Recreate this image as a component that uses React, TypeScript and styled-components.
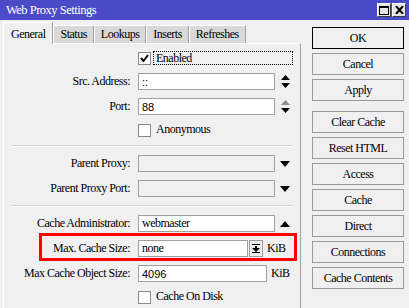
import React from 'react';
import styled, { createGlobalStyle } from 'styled-components';

const GlobalStyle = createGlobalStyle`
    html, body {
        margin: 0;
        padding: 0;
        background: #f0f0f0;
    }
    * {
        box-sizing: border-box;
    }
`;

const Window = styled.div`
    width: 409px;
    height: 308px;
    overflow: hidden;
    background: #f0f0f0;
    font-family: "Liberation Serif", "Times New Roman", serif;
    font-size: 12px;
    letter-spacing: -0.5px;
    color: #000;
    display: flex;
    flex-direction: column;
`;

const TitleBar = styled.div`
    height: 20px;
    flex-shrink: 0;
    background: #4b4bc8;
    display: flex;
    align-items: center;
    padding: 0 3px 0 6px;
`;

const Title = styled.div`
    flex: 1;
    color: #fff;
    font-size: 12.5px;
    padding-top: 1px;
`;

const TitleButton = styled.div`
    width: 14px;
    height: 14px;
    margin-left: 1px;
    background: #e4e4e4;
    border: 1px solid #fff;
    border-right-color: #404040;
    border-bottom-color: #404040;
    display: flex;
    align-items: center;
    justify-content: center;
`;

const Body = styled.div`
    flex: 1;
    display: flex;
    padding-top: 2px;
`;

const LeftSide = styled.div`
    width: 298px;
    margin-left: 3px;
    display: flex;
    flex-direction: column;
`;

const TabRow = styled.div`
    height: 21px;
    display: flex;
    align-items: flex-end;
    position: relative;
    z-index: 1;
`;

const Tab = styled.div<{ $active?: boolean }>`
    height: ${p => (p.$active ? 22 : 18)}px;
    margin-bottom: ${p => (p.$active ? -1 : 0)}px;
    padding: ${p => (p.$active ? '2px 7px 0 7px' : '0 6px')};
    background: ${p => (p.$active ? '#f0f0f0' : '#d9d9d9')};
    border-left: 1px solid #fff;
    border-top: 1px solid #fff;
    border-right: 1px solid #a0a0a0;
    display: flex;
    align-items: center;
    white-space: nowrap;
`;

const Panel = styled.div`
    flex: 1;
    border-top: 1px solid #fff;
    border-left: 1px solid #fff;
    border-right: 1px solid #a0a0a0;
    padding-top: 7px;
    display: flex;
    flex-direction: column;
    gap: 8px;
`;

const Row = styled.div<{ $marked?: boolean }>`
    height: 17px;
    display: flex;
    align-items: center;
    position: relative;

    ${p =>
        p.$marked &&
        `
        &::after {
            content: '';
            position: absolute;
            left: 35px;
            right: 3px;
            top: -7px;
            bottom: -4px;
            border: 3px solid #ff0000;
        }
    `}
`;

const Label = styled.div`
    width: 127px;
    text-align: right;
    padding-right: 1px;
    margin-right: 7px;
    white-space: nowrap;
`;

const Input = styled.div<{ $w: number; $sans?: boolean; $empty?: boolean }>`
    width: ${p => p.$w}px;
    height: 17px;
    border: 1px solid #a0a0a0;
    background: ${p => (p.$empty ? '#f0f0f0' : '#fff')};
    padding-left: 3px;
    display: flex;
    align-items: center;
    font-family: ${p => (p.$sans ? '"Liberation Sans", Arial, sans-serif' : 'inherit')};
    font-size: ${p => (p.$sans ? 11 : 12)}px;
    letter-spacing: ${p => (p.$sans ? 0 : -0.5)}px;
    white-space: nowrap;
`;

const Trail = styled.div`
    width: 10px;
    margin-left: 5px;
    display: flex;
    align-items: center;
    justify-content: center;
`;

const SmallButton = styled.div`
    width: 14px;
    height: 17px;
    margin-left: 1px;
    border: 1px solid #a0a0a0;
    background: #ececec;
    display: flex;
    align-items: center;
    justify-content: center;
`;

const Unit = styled.div`
    margin-left: 4px;
`;

const CheckRow = styled.div`
    height: 14px;
    margin-left: 134px;
    display: flex;
    align-items: center;
`;

const Box = styled.div`
    width: 13px;
    height: 13px;
    border: 1px solid #8a8a8a;
    background: #fff;
    display: flex;
    align-items: center;
    justify-content: center;
    flex-shrink: 0;
`;

const CheckText = styled.div<{ $focus?: boolean }>`
    margin-left: ${p => (p.$focus ? 2 : 5)}px;
    padding: 0 0 0 ${p => (p.$focus ? 2 : 0)}px;
    height: 14px;
    line-height: 13px;
    width: ${p => (p.$focus ? '140px' : 'auto')};
    border: ${p => (p.$focus ? '1px dotted #000' : 'none')};
`;

const Separator = styled.div`
    height: 2px;
    margin: 0 8px;
    border-top: 1px solid #d2d2d2;
    border-bottom: 1px solid #fff;
`;

const ButtonColumn = styled.div`
    width: 92px;
    margin-left: 11px;
    padding-top: 5px;
    display: flex;
    flex-direction: column;
    gap: 4px;
`;

const Button = styled.div<{ $primary?: boolean; $spaced?: boolean }>`
    height: 22px;
    border: 1px solid ${p => (p.$primary ? '#000' : '#9a9a9a')};
    background: #f0f0f0;
    margin-top: ${p => (p.$spaced ? 6 : 0)}px;
    display: flex;
    align-items: center;
    justify-content: center;
    white-space: nowrap;
`;

function SpinArrows({ upColor }: { upColor: string }) {
    return (
        <svg width="9" height="13" viewBox="0 0 9 13">
            <polygon points="0,5 9,5 4.5,0" fill={upColor} />
            <polygon points="0,8 9,8 4.5,13" fill="#000" />
        </svg>
    );
}

function DownArrow() {
    return (
        <svg width="10" height="6" viewBox="0 0 10 6">
            <polygon points="0,0 10,0 5,6" fill="#000" />
        </svg>
    );
}

function UpArrow() {
    return (
        <svg width="10" height="6" viewBox="0 0 10 6">
            <polygon points="0,6 10,6 5,0" fill="#000" />
        </svg>
    );
}

function UnsetArrow() {
    return (
        <svg width="8" height="9" viewBox="0 0 8 9">
            <rect x="0" y="0" width="8" height="1" fill="#000" />
            <rect x="3" y="2" width="2" height="2" fill="#000" />
            <polygon points="0,4 8,4 4,8" fill="#000" />
            <rect x="0" y="8" width="8" height="1" fill="#000" />
        </svg>
    );
}

function Check() {
    return (
        <svg width="9" height="9" viewBox="0 0 9 9">
            <polyline points="1,4 3.5,7 8,1" fill="none" stroke="#000" strokeWidth="2" />
        </svg>
    );
}

function MaxIcon() {
    return (
        <svg width="10" height="9" viewBox="0 0 10 9">
            <rect x="0.5" y="0.5" width="9" height="8" fill="none" stroke="#000" />
            <rect x="0" y="0" width="10" height="2" fill="#000" />
        </svg>
    );
}

function CloseIcon() {
    return (
        <svg width="9" height="8" viewBox="0 0 9 8">
            <path d="M1 0 L8 8 M8 0 L1 8" stroke="#000" strokeWidth="2" />
        </svg>
    );
}

function App() {
    return (
        <Window>
            <GlobalStyle />
            <TitleBar>
                <Title>Web Proxy Settings</Title>
                <TitleButton><MaxIcon /></TitleButton>
                <TitleButton><CloseIcon /></TitleButton>
            </TitleBar>
            <Body>
                <LeftSide>
                    <TabRow>
                        <Tab $active>General</Tab>
                        <Tab>Status</Tab>
                        <Tab>Lookups</Tab>
                        <Tab>Inserts</Tab>
                        <Tab>Refreshes</Tab>
                    </TabRow>
                    <Panel>
                        <CheckRow>
                            <Box><Check /></Box>
                            <CheckText $focus>Enabled</CheckText>
                        </CheckRow>
                        <Row>
                            <Label>Src. Address:</Label>
                            <Input $w={137} $sans>::</Input>
                            <Trail><SpinArrows upColor="#000" /></Trail>
                        </Row>
                        <Row>
                            <Label>Port:</Label>
                            <Input $w={137} $sans>88</Input>
                            <Trail><SpinArrows upColor="#8c8c8c" /></Trail>
                        </Row>
                        <CheckRow>
                            <Box />
                            <CheckText>Anonymous</CheckText>
                        </CheckRow>
                        <Separator />
                        <Row>
                            <Label>Parent Proxy:</Label>
                            <Input $w={137} $empty />
                            <Trail><DownArrow /></Trail>
                        </Row>
                        <Row>
                            <Label>Parent Proxy Port:</Label>
                            <Input $w={137} $empty />
                            <Trail><DownArrow /></Trail>
                        </Row>
                        <Separator />
                        <Row>
                            <Label>Cache Administrator:</Label>
                            <Input $w={137}>webmaster</Input>
                            <Trail><UpArrow /></Trail>
                        </Row>
                        <Row $marked>
                            <Label>Max. Cache Size:</Label>
                            <Input $w={110}>none</Input>
                            <SmallButton><UnsetArrow /></SmallButton>
                            <Unit>KiB</Unit>
                        </Row>
                        <Row>
                            <Label>Max Cache Object Size:</Label>
                            <Input $w={129} $sans>4096</Input>
                            <Unit>KiB</Unit>
                        </Row>
                        <CheckRow>
                            <Box />
                            <CheckText>Cache On Disk</CheckText>
                        </CheckRow>
                    </Panel>
                </LeftSide>
                <ButtonColumn>
                    <Button $primary>OK</Button>
                    <Button>Cancel</Button>
                    <Button>Apply</Button>
                    <Button $spaced>Clear Cache</Button>
                    <Button>Reset HTML</Button>
                    <Button>Access</Button>
                    <Button>Cache</Button>
                    <Button>Direct</Button>
                    <Button>Connections</Button>
                    <Button>Cache Contents</Button>
                </ButtonColumn>
            </Body>
        </Window>
    );
}

export default App;
